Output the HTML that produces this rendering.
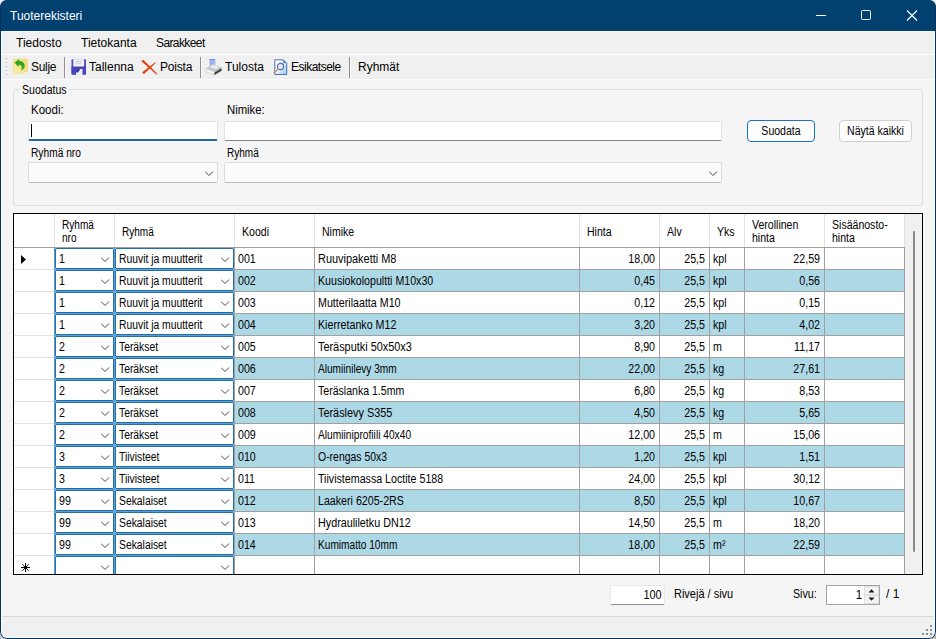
<!DOCTYPE html>
<html lang="fi"><head><meta charset="utf-8"><title>Tuoterekisteri</title>
<style>
html,body{margin:0;padding:0;}
body{width:936px;height:639px;overflow:hidden;background:#c9c9c9;font-family:"Liberation Sans",sans-serif;font-size:11px;color:#000;position:relative;}
.abs,.abs *{position:absolute;box-sizing:border-box;}
#win{left:0;top:0;width:936px;height:639px;border-radius:7px;background:#f5f5f5;overflow:hidden;}
#title{left:0;top:0;width:936px;height:31px;background:#02406f;color:#fff;font-size:12px;}
#title span{left:10px;top:9px;white-space:nowrap;}
#menu{left:1px;top:31px;width:934px;height:24px;background:#f0f0f0;font-size:12px;}
#menu span{top:5px;white-space:nowrap;}
#tool{left:1px;top:55px;width:934px;height:24px;background:#f0f0f0;border-top:1px solid #f0f0f0;font-size:12px;}
#tool span{top:4px;white-space:nowrap;}
.sep{top:1px;width:2px;height:21px;background:#8f8f8f;border-right:1px solid #fafafa;}
.lbl{white-space:nowrap;}
.g{font-size:12px;transform:scaleX(.879);transform-origin:0 0;line-height:13px;}
.b{font-size:13px;transform-origin:0 0;line-height:15px;}
.tb{background:#fff;border:1px solid #e3e3e3;border-bottom:1px solid #868686;border-radius:2px;}
.cb{background:#fcfcfc;border:1px solid #dcdcdc;border-bottom-color:#bdbdbd;border-radius:2px;}
.btn{background:#fdfdfd;border:1px solid #d0d0d0;border-radius:4px;}
.btn div{left:0;top:0;width:100%;text-align:center;line-height:21px;font-size:12px;transform:scaleX(.879);white-space:nowrap;}
#grid{left:13px;top:213px;width:910px;height:362px;background:#fff;border:1px solid #000;overflow:hidden;}
.hl{background:#a0a0a0;}
.hh{background:#e2e2e2;}
.bl{background:#5a9fd6;}
.alt{background:#add8e6;}
.c{white-space:nowrap;font-size:12px;transform:scaleX(.888);transform-origin:0 0;line-height:21px;height:22px;padding-top:1px;}
.r{text-align:right;transform-origin:100% 0;}
.cbx{border:1px solid #2170a8;background:#fff;height:21px;border-radius:1px;}
</style></head><body>
<div class="abs"><div style="left:0;top:0;width:10px;height:10px;background:#e6e8ee"></div><div style="left:926px;top:0;width:10px;height:10px;background:#e9ebee"></div><div style="left:0;top:629px;width:10px;height:10px;background:#c3c6ca"></div><div style="left:926px;top:629px;width:10px;height:10px;background:#b6b6a6"></div></div>
<div class="abs" id="win">
<div id="title"><span>Tuoterekisteri</span>
<svg style="left:798px;top:0" width="138" height="31" viewBox="0 0 138 31"><g stroke="#fff" stroke-width="1" fill="none"><path d="M18 15.5h10"/><rect x="63.5" y="10.5" width="9" height="9" rx="1"/><path d="M109 10.500l10 10M119 10.500l-10 10" stroke-width="1.100"/></g></svg>
</div>
<div id="menu"><span style="left:15px">Tiedosto</span><span style="left:80px">Tietokanta</span><span style="left:155px;letter-spacing:-0.6px">Sarakkeet</span></div>
<div style="left:1px;top:54px;width:934px;height:1px;background:#fdfdfd"></div>
<div id="tool">
<svg style="left:3px;top:0px" width="5" height="22" viewBox="0 0 5 22"><g fill="#a6a6a6"><rect x="2" y="2" width="1" height="1"/><rect x="2" y="6" width="1" height="1"/><rect x="2" y="10" width="1" height="1"/><rect x="2" y="14" width="1" height="1"/><rect x="2" y="18" width="1" height="1"/></g><g fill="#fff"><rect x="1" y="3" width="1" height="1"/><rect x="1" y="7" width="1" height="1"/><rect x="1" y="11" width="1" height="1"/><rect x="1" y="15" width="1" height="1"/><rect x="1" y="19" width="1" height="1"/></g></svg>
<svg style="left:10px;top:1px" width="19" height="19" viewBox="0 0 19 19"><defs><linearGradient id="gy" x1="1" y1="0" x2="0" y2="1"><stop offset="0" stop-color="#f3d765"/><stop offset="1" stop-color="#fdf3b4"/></linearGradient></defs><path d="M2.500 2.200L16.300 2l.2 12.300-5.500 1.200-1.500 1.300-1.500-.8-5.300 1z" fill="url(#gy)" stroke="#ecd27a" stroke-width=".7"/><path d="M3.800 5.600L7.800 2.700L8 4.200C11 4 13.600 6 13.500 9C13.400 10.800 12 12.300 10.400 13.200C11.200 11.500 11.300 9.500 10 8.200C9.300 7.600 8.300 7.400 7.500 7.500L7.300 9.500Z" fill="#2daa1c" stroke="#1f8a14" stroke-width=".4"/></svg>
<span style="left:30px;letter-spacing:-0.3px">Sulje</span>
<div class="sep" style="left:63px"></div>
<svg style="left:69px;top:1px" width="18" height="19" viewBox="0 0 18 19"><path d="M1.500 3.200q0-1 1-1h12.500q1 0 1 1v13.500q0 1-1 1h-12.500q-1 0-1-1z" fill="#5552c4"/><path d="M1.500 9h14.500v7.500q0 1-1 1h-12.500q-1 0-1-1z" fill="#4a45b8"/><rect x="3.300" y="2.200" width="10.700" height="7.300" fill="#f4f5fb"/><rect x="5.300" y="4" width="6.700" height="1.200" fill="#c9cbd3"/><rect x="5.300" y="6" width="6.700" height="1.200" fill="#d5d7de"/><path d="M6 12h6.500v6h-6.500z" fill="#eeeef6"/><path d="M6 12h4.200l-2 3.500h-2.200z" fill="#403cae"/></svg>
<span style="left:88px">Tallenna</span>
<svg style="left:138px;top:1px" width="20" height="20" viewBox="0 0 20 20"><path d="M2.300 4.200L4.300 2.800 18.300 16.800l-.8.700z" fill="#e2400f"/><path d="M3.200 15.300L4.800 17.300 16.800 6l-.6-.7z" fill="#e2400f"/></svg>
<span style="left:159px;letter-spacing:-0.2px">Poista</span>
<div class="sep" style="left:199px"></div>
<svg style="left:203px;top:1px" width="20" height="20" viewBox="0 0 20 20"><defs><linearGradient id="gp" x1="0" y1="0" x2="1" y2="0"><stop offset="0" stop-color="#8ea5ee"/><stop offset="1" stop-color="#a9c0fa"/></linearGradient></defs><path d="M5.800 2.800h5.700v6h-5.700z" fill="url(#gp)"/><path d="M5 2h6l.8.900h-6.800z" fill="#8394e4"/><path d="M2 11.500L8.300 7l9.200 3.500-7 4.500z" fill="#c6c8ca"/><path d="M6 10l3-2.200 6.200 2.400-3 2.100z" fill="#e9ebed"/><path d="M2 11.500l8.500 3.500v3.200L2 14.600z" fill="#f7f7f7" stroke="#bcbcbc" stroke-width=".5"/><path d="M10.500 15l7-4.500v3.400l-7 4.300z" fill="#8a8c8e"/><path d="M10.500 16l7-4.300v1.500l-7 4.200z" fill="#2b2b2b"/></svg>
<span style="left:224px">Tulosta</span>
<svg style="left:270px;top:1px" width="19" height="20" viewBox="0 0 19 20"><defs><linearGradient id="gd" x1="0" y1="0" x2="1" y2="1"><stop offset="0" stop-color="#ffffff"/><stop offset=".45" stop-color="#f2f8fe"/><stop offset="1" stop-color="#8cc6f2"/></linearGradient></defs><path d="M3.800 2.800h8.400l3.500 3.500v11.200H3.800z" fill="url(#gd)" stroke="#4c6fc4" stroke-width="1"/><path d="M12.200 2.800l3.500 3.500h-3.500z" fill="#4f7fd6"/><circle cx="9.500" cy="9.500" r="3.100" fill="#dfe9fb" fill-opacity=".85" stroke="#5865a6" stroke-width="1.100"/><path d="M7 12.200L3 15.800" stroke="#d98a3c" stroke-width="1.300" stroke-linecap="round"/></svg>
<span style="left:290px;letter-spacing:-0.5px">Esikatsele</span>
<div class="sep" style="left:348px"></div>
<span style="left:357px">Ryhmät</span>
</div>
<div style="left:1px;top:79px;width:934px;height:1px;background:#fbfbfb"></div>
<div style="left:13px;top:89px;width:910px;height:117px;border:1px solid #dcdcdc;border-radius:3px;"></div>
<div style="left:20px;top:88px;width:48px;height:3px;background:#f5f5f5"></div><div class="lbl g" style="left:22px;top:84px;">Suodatus</div>
<div class="lbl b" style="left:31px;top:102px;transform:scaleX(.886)">Koodi:</div>
<div class="lbl b" style="left:227px;top:102px;transform:scaleX(.87)">Nimike:</div>
<div class="tb" style="left:28px;top:121px;width:190px;height:20px;border-bottom:2px solid #1a6aa8;"><div style="left:2px;top:2px;width:1px;height:13px;background:#000"></div></div>
<div class="tb" style="left:224px;top:121px;width:498px;height:20px;"></div>
<div class="lbl g" style="left:31px;top:147px;transform:scaleX(.85)">Ryhmä nro</div>
<div class="lbl g" style="left:227px;top:147px;transform:scaleX(.835)">Ryhmä</div>
<div class="cb" style="left:28px;top:162px;width:190px;height:21px;"><svg style="left:176px;top:8px" width="9" height="6" viewBox="0 0 9 6"><path d="M0 .5l4 4 4-4" fill="none" stroke="#4a4a4a" stroke-width="1"/></svg></div>
<div class="cb" style="left:224px;top:162px;width:498px;height:21px;"><svg style="left:484px;top:8px" width="9" height="6" viewBox="0 0 9 6"><path d="M0 .5l4 4 4-4" fill="none" stroke="#4a4a4a" stroke-width="1"/></svg></div>
<div class="btn" style="left:747px;top:120px;width:68px;height:22px;border-color:#1873c4;"><div>Suodata</div></div>
<div class="btn" style="left:839px;top:120px;width:73px;height:22px;"><div>Näytä kaikki</div></div>
<div id="grid">
<div class="hh" style="left:40px;top:0;width:1px;height:33px"></div><div class="hh" style="left:100px;top:0;width:1px;height:33px"></div><div class="hh" style="left:220px;top:0;width:1px;height:33px"></div><div class="hh" style="left:300px;top:0;width:1px;height:33px"></div><div class="hh" style="left:565px;top:0;width:1px;height:33px"></div><div class="hh" style="left:645px;top:0;width:1px;height:33px"></div><div class="hh" style="left:695px;top:0;width:1px;height:33px"></div><div class="hh" style="left:730px;top:0;width:1px;height:33px"></div><div class="hh" style="left:810px;top:0;width:1px;height:33px"></div><div class="hh" style="left:890px;top:0;width:1px;height:33px"></div><div class="hl" style="left:0;top:33px;width:891px;height:1px"></div><div class="lbl g" style="left:48px;top:5px;transform:scaleX(0.84)">Ryhmä<br>nro</div><div class="lbl g" style="left:108px;top:12px;transform:scaleX(0.835)">Ryhmä</div><div class="lbl g" style="left:228px;top:12px;transform:scaleX(0.879)">Koodi</div><div class="lbl g" style="left:308px;top:12px;transform:scaleX(0.879)">Nimike</div><div class="lbl g" style="left:573px;top:12px;transform:scaleX(0.879)">Hinta</div><div class="lbl g" style="left:653px;top:12px;transform:scaleX(0.879)">Alv</div><div class="lbl g" style="left:703px;top:12px;transform:scaleX(0.879)">Yks</div><div class="lbl g" style="left:738px;top:5px;transform:scaleX(0.879)">Verollinen<br>hinta</div><div class="lbl g" style="left:818px;top:5px;transform:scaleX(0.879)">Sisäänosto-<br>hinta</div><div class="bl" style="left:40px;top:55px;width:180px;height:1px"></div><div class="hl" style="left:220px;top:55px;width:671px;height:1px"></div><div class="hh" style="left:0;top:55px;width:40px;height:1px"></div><div class="cbx" style="left:41px;top:34px;width:59px"><div class="c" style="left:3px;top:-1px">1</div><svg style="left:45px;top:8px" width="9" height="6" viewBox="0 0 9 6"><path d="M0 .5l4 4 4-4" fill="none" stroke="#4a4a4a" stroke-width="1"/></svg></div><div class="cbx" style="left:101px;top:34px;width:119px"><div class="c" style="left:3px;top:-1px;transform:scaleX(.862)">Ruuvit ja muutterit</div><svg style="left:105px;top:8px" width="9" height="6" viewBox="0 0 9 6"><path d="M0 .5l4 4 4-4" fill="none" stroke="#4a4a4a" stroke-width="1"/></svg></div><div class="c" style="left:224px;top:34px">001</div><div class="c" style="left:304px;top:34px;transform:scaleX(0.911)">Ruuvipaketti M8</div><div class="c r" style="left:566px;top:34px;width:75px">18,00</div><div class="c r" style="left:646px;top:34px;width:45px">25,5</div><div class="c" style="left:699px;top:34px">kpl</div><div class="c r" style="left:731px;top:34px;width:75px">22,59</div><div class="alt" style="left:221px;top:56px;width:669px;height:21px"></div><div class="bl" style="left:40px;top:77px;width:180px;height:1px"></div><div class="hl" style="left:220px;top:77px;width:671px;height:1px"></div><div class="hh" style="left:0;top:77px;width:40px;height:1px"></div><div class="cbx" style="left:41px;top:56px;width:59px"><div class="c" style="left:3px;top:-1px">1</div><svg style="left:45px;top:8px" width="9" height="6" viewBox="0 0 9 6"><path d="M0 .5l4 4 4-4" fill="none" stroke="#4a4a4a" stroke-width="1"/></svg></div><div class="cbx" style="left:101px;top:56px;width:119px"><div class="c" style="left:3px;top:-1px;transform:scaleX(.862)">Ruuvit ja muutterit</div><svg style="left:105px;top:8px" width="9" height="6" viewBox="0 0 9 6"><path d="M0 .5l4 4 4-4" fill="none" stroke="#4a4a4a" stroke-width="1"/></svg></div><div class="c" style="left:224px;top:56px">002</div><div class="c" style="left:304px;top:56px;transform:scaleX(0.886)">Kuusiokolopultti M10x30</div><div class="c r" style="left:566px;top:56px;width:75px">0,45</div><div class="c r" style="left:646px;top:56px;width:45px">25,5</div><div class="c" style="left:699px;top:56px">kpl</div><div class="c r" style="left:731px;top:56px;width:75px">0,56</div><div class="bl" style="left:40px;top:99px;width:180px;height:1px"></div><div class="hl" style="left:220px;top:99px;width:671px;height:1px"></div><div class="hh" style="left:0;top:99px;width:40px;height:1px"></div><div class="cbx" style="left:41px;top:78px;width:59px"><div class="c" style="left:3px;top:-1px">1</div><svg style="left:45px;top:8px" width="9" height="6" viewBox="0 0 9 6"><path d="M0 .5l4 4 4-4" fill="none" stroke="#4a4a4a" stroke-width="1"/></svg></div><div class="cbx" style="left:101px;top:78px;width:119px"><div class="c" style="left:3px;top:-1px;transform:scaleX(.862)">Ruuvit ja muutterit</div><svg style="left:105px;top:8px" width="9" height="6" viewBox="0 0 9 6"><path d="M0 .5l4 4 4-4" fill="none" stroke="#4a4a4a" stroke-width="1"/></svg></div><div class="c" style="left:224px;top:78px">003</div><div class="c" style="left:304px;top:78px;transform:scaleX(0.89)">Mutterilaatta M10</div><div class="c r" style="left:566px;top:78px;width:75px">0,12</div><div class="c r" style="left:646px;top:78px;width:45px">25,5</div><div class="c" style="left:699px;top:78px">kpl</div><div class="c r" style="left:731px;top:78px;width:75px">0,15</div><div class="alt" style="left:221px;top:100px;width:669px;height:21px"></div><div class="bl" style="left:40px;top:121px;width:180px;height:1px"></div><div class="hl" style="left:220px;top:121px;width:671px;height:1px"></div><div class="hh" style="left:0;top:121px;width:40px;height:1px"></div><div class="cbx" style="left:41px;top:100px;width:59px"><div class="c" style="left:3px;top:-1px">1</div><svg style="left:45px;top:8px" width="9" height="6" viewBox="0 0 9 6"><path d="M0 .5l4 4 4-4" fill="none" stroke="#4a4a4a" stroke-width="1"/></svg></div><div class="cbx" style="left:101px;top:100px;width:119px"><div class="c" style="left:3px;top:-1px;transform:scaleX(.862)">Ruuvit ja muutterit</div><svg style="left:105px;top:8px" width="9" height="6" viewBox="0 0 9 6"><path d="M0 .5l4 4 4-4" fill="none" stroke="#4a4a4a" stroke-width="1"/></svg></div><div class="c" style="left:224px;top:100px">004</div><div class="c" style="left:304px;top:100px;transform:scaleX(0.89)">Kierretanko M12</div><div class="c r" style="left:566px;top:100px;width:75px">3,20</div><div class="c r" style="left:646px;top:100px;width:45px">25,5</div><div class="c" style="left:699px;top:100px">kpl</div><div class="c r" style="left:731px;top:100px;width:75px">4,02</div><div class="bl" style="left:40px;top:143px;width:180px;height:1px"></div><div class="hl" style="left:220px;top:143px;width:671px;height:1px"></div><div class="hh" style="left:0;top:143px;width:40px;height:1px"></div><div class="cbx" style="left:41px;top:122px;width:59px"><div class="c" style="left:3px;top:-1px">2</div><svg style="left:45px;top:8px" width="9" height="6" viewBox="0 0 9 6"><path d="M0 .5l4 4 4-4" fill="none" stroke="#4a4a4a" stroke-width="1"/></svg></div><div class="cbx" style="left:101px;top:122px;width:119px"><div class="c" style="left:3px;top:-1px;transform:scaleX(.862)">Teräkset</div><svg style="left:105px;top:8px" width="9" height="6" viewBox="0 0 9 6"><path d="M0 .5l4 4 4-4" fill="none" stroke="#4a4a4a" stroke-width="1"/></svg></div><div class="c" style="left:224px;top:122px">005</div><div class="c" style="left:304px;top:122px;transform:scaleX(0.907)">Teräsputki 50x50x3</div><div class="c r" style="left:566px;top:122px;width:75px">8,90</div><div class="c r" style="left:646px;top:122px;width:45px">25,5</div><div class="c" style="left:699px;top:122px">m</div><div class="c r" style="left:731px;top:122px;width:75px">11,17</div><div class="alt" style="left:221px;top:144px;width:669px;height:21px"></div><div class="bl" style="left:40px;top:165px;width:180px;height:1px"></div><div class="hl" style="left:220px;top:165px;width:671px;height:1px"></div><div class="hh" style="left:0;top:165px;width:40px;height:1px"></div><div class="cbx" style="left:41px;top:144px;width:59px"><div class="c" style="left:3px;top:-1px">2</div><svg style="left:45px;top:8px" width="9" height="6" viewBox="0 0 9 6"><path d="M0 .5l4 4 4-4" fill="none" stroke="#4a4a4a" stroke-width="1"/></svg></div><div class="cbx" style="left:101px;top:144px;width:119px"><div class="c" style="left:3px;top:-1px;transform:scaleX(.862)">Teräkset</div><svg style="left:105px;top:8px" width="9" height="6" viewBox="0 0 9 6"><path d="M0 .5l4 4 4-4" fill="none" stroke="#4a4a4a" stroke-width="1"/></svg></div><div class="c" style="left:224px;top:144px">006</div><div class="c" style="left:304px;top:144px;transform:scaleX(0.843)">Alumiinilevy 3mm</div><div class="c r" style="left:566px;top:144px;width:75px">22,00</div><div class="c r" style="left:646px;top:144px;width:45px">25,5</div><div class="c" style="left:699px;top:144px">kg</div><div class="c r" style="left:731px;top:144px;width:75px">27,61</div><div class="bl" style="left:40px;top:187px;width:180px;height:1px"></div><div class="hl" style="left:220px;top:187px;width:671px;height:1px"></div><div class="hh" style="left:0;top:187px;width:40px;height:1px"></div><div class="cbx" style="left:41px;top:166px;width:59px"><div class="c" style="left:3px;top:-1px">2</div><svg style="left:45px;top:8px" width="9" height="6" viewBox="0 0 9 6"><path d="M0 .5l4 4 4-4" fill="none" stroke="#4a4a4a" stroke-width="1"/></svg></div><div class="cbx" style="left:101px;top:166px;width:119px"><div class="c" style="left:3px;top:-1px;transform:scaleX(.862)">Teräkset</div><svg style="left:105px;top:8px" width="9" height="6" viewBox="0 0 9 6"><path d="M0 .5l4 4 4-4" fill="none" stroke="#4a4a4a" stroke-width="1"/></svg></div><div class="c" style="left:224px;top:166px">007</div><div class="c" style="left:304px;top:166px;transform:scaleX(0.88)">Teräslanka 1.5mm</div><div class="c r" style="left:566px;top:166px;width:75px">6,80</div><div class="c r" style="left:646px;top:166px;width:45px">25,5</div><div class="c" style="left:699px;top:166px">kg</div><div class="c r" style="left:731px;top:166px;width:75px">8,53</div><div class="alt" style="left:221px;top:188px;width:669px;height:21px"></div><div class="bl" style="left:40px;top:209px;width:180px;height:1px"></div><div class="hl" style="left:220px;top:209px;width:671px;height:1px"></div><div class="hh" style="left:0;top:209px;width:40px;height:1px"></div><div class="cbx" style="left:41px;top:188px;width:59px"><div class="c" style="left:3px;top:-1px">2</div><svg style="left:45px;top:8px" width="9" height="6" viewBox="0 0 9 6"><path d="M0 .5l4 4 4-4" fill="none" stroke="#4a4a4a" stroke-width="1"/></svg></div><div class="cbx" style="left:101px;top:188px;width:119px"><div class="c" style="left:3px;top:-1px;transform:scaleX(.862)">Teräkset</div><svg style="left:105px;top:8px" width="9" height="6" viewBox="0 0 9 6"><path d="M0 .5l4 4 4-4" fill="none" stroke="#4a4a4a" stroke-width="1"/></svg></div><div class="c" style="left:224px;top:188px">008</div><div class="c" style="left:304px;top:188px;transform:scaleX(0.905)">Teräslevy S355</div><div class="c r" style="left:566px;top:188px;width:75px">4,50</div><div class="c r" style="left:646px;top:188px;width:45px">25,5</div><div class="c" style="left:699px;top:188px">kg</div><div class="c r" style="left:731px;top:188px;width:75px">5,65</div><div class="bl" style="left:40px;top:231px;width:180px;height:1px"></div><div class="hl" style="left:220px;top:231px;width:671px;height:1px"></div><div class="hh" style="left:0;top:231px;width:40px;height:1px"></div><div class="cbx" style="left:41px;top:210px;width:59px"><div class="c" style="left:3px;top:-1px">2</div><svg style="left:45px;top:8px" width="9" height="6" viewBox="0 0 9 6"><path d="M0 .5l4 4 4-4" fill="none" stroke="#4a4a4a" stroke-width="1"/></svg></div><div class="cbx" style="left:101px;top:210px;width:119px"><div class="c" style="left:3px;top:-1px;transform:scaleX(.862)">Teräkset</div><svg style="left:105px;top:8px" width="9" height="6" viewBox="0 0 9 6"><path d="M0 .5l4 4 4-4" fill="none" stroke="#4a4a4a" stroke-width="1"/></svg></div><div class="c" style="left:224px;top:210px">009</div><div class="c" style="left:304px;top:210px;transform:scaleX(0.851)">Alumiiniprofiili 40x40</div><div class="c r" style="left:566px;top:210px;width:75px">12,00</div><div class="c r" style="left:646px;top:210px;width:45px">25,5</div><div class="c" style="left:699px;top:210px">m</div><div class="c r" style="left:731px;top:210px;width:75px">15,06</div><div class="alt" style="left:221px;top:232px;width:669px;height:21px"></div><div class="bl" style="left:40px;top:253px;width:180px;height:1px"></div><div class="hl" style="left:220px;top:253px;width:671px;height:1px"></div><div class="hh" style="left:0;top:253px;width:40px;height:1px"></div><div class="cbx" style="left:41px;top:232px;width:59px"><div class="c" style="left:3px;top:-1px">3</div><svg style="left:45px;top:8px" width="9" height="6" viewBox="0 0 9 6"><path d="M0 .5l4 4 4-4" fill="none" stroke="#4a4a4a" stroke-width="1"/></svg></div><div class="cbx" style="left:101px;top:232px;width:119px"><div class="c" style="left:3px;top:-1px;transform:scaleX(.862)">Tiivisteet</div><svg style="left:105px;top:8px" width="9" height="6" viewBox="0 0 9 6"><path d="M0 .5l4 4 4-4" fill="none" stroke="#4a4a4a" stroke-width="1"/></svg></div><div class="c" style="left:224px;top:232px">010</div><div class="c" style="left:304px;top:232px;transform:scaleX(0.871)">O-rengas 50x3</div><div class="c r" style="left:566px;top:232px;width:75px">1,20</div><div class="c r" style="left:646px;top:232px;width:45px">25,5</div><div class="c" style="left:699px;top:232px">kpl</div><div class="c r" style="left:731px;top:232px;width:75px">1,51</div><div class="bl" style="left:40px;top:275px;width:180px;height:1px"></div><div class="hl" style="left:220px;top:275px;width:671px;height:1px"></div><div class="hh" style="left:0;top:275px;width:40px;height:1px"></div><div class="cbx" style="left:41px;top:254px;width:59px"><div class="c" style="left:3px;top:-1px">3</div><svg style="left:45px;top:8px" width="9" height="6" viewBox="0 0 9 6"><path d="M0 .5l4 4 4-4" fill="none" stroke="#4a4a4a" stroke-width="1"/></svg></div><div class="cbx" style="left:101px;top:254px;width:119px"><div class="c" style="left:3px;top:-1px;transform:scaleX(.862)">Tiivisteet</div><svg style="left:105px;top:8px" width="9" height="6" viewBox="0 0 9 6"><path d="M0 .5l4 4 4-4" fill="none" stroke="#4a4a4a" stroke-width="1"/></svg></div><div class="c" style="left:224px;top:254px">011</div><div class="c" style="left:304px;top:254px;transform:scaleX(0.888)">Tiivistemassa Loctite 5188</div><div class="c r" style="left:566px;top:254px;width:75px">24,00</div><div class="c r" style="left:646px;top:254px;width:45px">25,5</div><div class="c" style="left:699px;top:254px">kpl</div><div class="c r" style="left:731px;top:254px;width:75px">30,12</div><div class="alt" style="left:221px;top:276px;width:669px;height:21px"></div><div class="bl" style="left:40px;top:297px;width:180px;height:1px"></div><div class="hl" style="left:220px;top:297px;width:671px;height:1px"></div><div class="hh" style="left:0;top:297px;width:40px;height:1px"></div><div class="cbx" style="left:41px;top:276px;width:59px"><div class="c" style="left:3px;top:-1px">99</div><svg style="left:45px;top:8px" width="9" height="6" viewBox="0 0 9 6"><path d="M0 .5l4 4 4-4" fill="none" stroke="#4a4a4a" stroke-width="1"/></svg></div><div class="cbx" style="left:101px;top:276px;width:119px"><div class="c" style="left:3px;top:-1px;transform:scaleX(.862)">Sekalaiset</div><svg style="left:105px;top:8px" width="9" height="6" viewBox="0 0 9 6"><path d="M0 .5l4 4 4-4" fill="none" stroke="#4a4a4a" stroke-width="1"/></svg></div><div class="c" style="left:224px;top:276px">012</div><div class="c" style="left:304px;top:276px;transform:scaleX(0.888)">Laakeri 6205-2RS</div><div class="c r" style="left:566px;top:276px;width:75px">8,50</div><div class="c r" style="left:646px;top:276px;width:45px">25,5</div><div class="c" style="left:699px;top:276px">kpl</div><div class="c r" style="left:731px;top:276px;width:75px">10,67</div><div class="bl" style="left:40px;top:319px;width:180px;height:1px"></div><div class="hl" style="left:220px;top:319px;width:671px;height:1px"></div><div class="hh" style="left:0;top:319px;width:40px;height:1px"></div><div class="cbx" style="left:41px;top:298px;width:59px"><div class="c" style="left:3px;top:-1px">99</div><svg style="left:45px;top:8px" width="9" height="6" viewBox="0 0 9 6"><path d="M0 .5l4 4 4-4" fill="none" stroke="#4a4a4a" stroke-width="1"/></svg></div><div class="cbx" style="left:101px;top:298px;width:119px"><div class="c" style="left:3px;top:-1px;transform:scaleX(.862)">Sekalaiset</div><svg style="left:105px;top:8px" width="9" height="6" viewBox="0 0 9 6"><path d="M0 .5l4 4 4-4" fill="none" stroke="#4a4a4a" stroke-width="1"/></svg></div><div class="c" style="left:224px;top:298px">013</div><div class="c" style="left:304px;top:298px;transform:scaleX(0.897)">Hydrauliletku DN12</div><div class="c r" style="left:566px;top:298px;width:75px">14,50</div><div class="c r" style="left:646px;top:298px;width:45px">25,5</div><div class="c" style="left:699px;top:298px">m</div><div class="c r" style="left:731px;top:298px;width:75px">18,20</div><div class="alt" style="left:221px;top:320px;width:669px;height:21px"></div><div class="bl" style="left:40px;top:341px;width:180px;height:1px"></div><div class="hl" style="left:220px;top:341px;width:671px;height:1px"></div><div class="hh" style="left:0;top:341px;width:40px;height:1px"></div><div class="cbx" style="left:41px;top:320px;width:59px"><div class="c" style="left:3px;top:-1px">99</div><svg style="left:45px;top:8px" width="9" height="6" viewBox="0 0 9 6"><path d="M0 .5l4 4 4-4" fill="none" stroke="#4a4a4a" stroke-width="1"/></svg></div><div class="cbx" style="left:101px;top:320px;width:119px"><div class="c" style="left:3px;top:-1px;transform:scaleX(.862)">Sekalaiset</div><svg style="left:105px;top:8px" width="9" height="6" viewBox="0 0 9 6"><path d="M0 .5l4 4 4-4" fill="none" stroke="#4a4a4a" stroke-width="1"/></svg></div><div class="c" style="left:224px;top:320px">014</div><div class="c" style="left:304px;top:320px;transform:scaleX(0.844)">Kumimatto 10mm</div><div class="c r" style="left:566px;top:320px;width:75px">18,00</div><div class="c r" style="left:646px;top:320px;width:45px">25,5</div><div class="c" style="left:699px;top:320px">m²</div><div class="c r" style="left:731px;top:320px;width:75px">22,59</div><div class="bl" style="left:40px;top:363px;width:180px;height:1px"></div><div class="hl" style="left:220px;top:363px;width:671px;height:1px"></div><div class="hh" style="left:0;top:363px;width:40px;height:1px"></div><div class="cbx" style="left:41px;top:342px;width:59px"><svg style="left:45px;top:8px" width="9" height="6" viewBox="0 0 9 6"><path d="M0 .5l4 4 4-4" fill="none" stroke="#4a4a4a" stroke-width="1"/></svg></div><div class="cbx" style="left:101px;top:342px;width:119px"><svg style="left:105px;top:8px" width="9" height="6" viewBox="0 0 9 6"><path d="M0 .5l4 4 4-4" fill="none" stroke="#4a4a4a" stroke-width="1"/></svg></div><div class="bl" style="left:40px;top:34px;width:1px;height:330px"></div><div class="bl" style="left:100px;top:34px;width:1px;height:330px"></div><div class="hl" style="left:220px;top:34px;width:1px;height:330px"></div><div class="hl" style="left:300px;top:34px;width:1px;height:330px"></div><div class="hl" style="left:565px;top:34px;width:1px;height:330px"></div><div class="hl" style="left:645px;top:34px;width:1px;height:330px"></div><div class="hl" style="left:695px;top:34px;width:1px;height:330px"></div><div class="hl" style="left:730px;top:34px;width:1px;height:330px"></div><div class="hl" style="left:810px;top:34px;width:1px;height:330px"></div><div class="hl" style="left:890px;top:34px;width:1px;height:330px"></div><svg style="left:7px;top:41px" width="6" height="9" viewBox="0 0 6 9"><path d="M0 0l5 4.500L0 9z" fill="#000"/></svg><svg style="left:7px;top:349px" width="9" height="9" viewBox="0 0 9 9"><g stroke="#000" stroke-width="1" fill="none"><path d="M0 4.500h9M4.500 0v9"/><path d="M1.300 1.300l6.400 6.400M7.700 1.300l-6.400 6.400" stroke-width=".9"/></g><rect x="3" y="3" width="3" height="3" fill="#000"/></svg><div style="left:891px;top:0;width:17px;height:360px;background:#f0f0f0"></div><div style="left:899px;top:17px;width:2px;height:321px;background:#8a8a8a;border-radius:1px"></div></div>
<div class="tb" style="left:610px;top:585px;width:55px;height:20px;border-color:#e9e9e9;border-bottom-color:#8f8f8f;"><div class="lbl b" style="right:2px;top:1px;transform:scaleX(.84);transform-origin:100% 0">100</div></div>
<div class="lbl b" style="left:674px;top:586px;transform:scaleX(.845)">Rivejä / sivu</div>
<div class="lbl b" style="left:793px;top:586px;transform:scaleX(.82)">Sivu:</div>
<div style="left:826px;top:585px;width:54px;height:20px;background:#fff;border:1px solid #a3a3a3;"><div class="lbl b" style="right:17px;top:1px;transform:scaleX(.88);transform-origin:100% 0">1</div>
<div style="left:37px;top:0;width:15px;height:9px;background:#f4f4f4;border:1px solid #e0e0e0"></div>
<div style="left:37px;top:9px;width:15px;height:9px;background:#f4f4f4;border:1px solid #e0e0e0"></div>
<svg style="left:41px;top:3px" width="7" height="13" viewBox="0 0 7 13"><path d="M.5 3.500L3.500 .3l3 3.200zM.5 8.500l3 3.200 3-3.200z" fill="#1a1a1a"/></svg>
</div>
<div class="lbl b" style="left:886px;top:586px;transform:scaleX(.92)">/ 1</div>
<div style="left:1px;top:616px;width:934px;height:1px;background:#d9d9d9"></div>
<div style="left:1px;top:617px;width:934px;height:21px;background:#f0f0f0"></div>
<svg style="left:922px;top:625px" width="12" height="12" viewBox="0 0 12 12"><g fill="#8c8c8c"><rect x="8" y="0" width="2" height="2"/><rect x="4" y="4" width="2" height="2"/><rect x="8" y="4" width="2" height="2"/><rect x="0" y="8" width="2" height="2"/><rect x="4" y="8" width="2" height="2"/><rect x="8" y="8" width="2" height="2"/></g></svg>
<div style="left:1px;top:31px;width:934px;height:607px;border:1px solid #f3fbff;border-radius:0 0 6px 6px;pointer-events:none"></div><div style="left:0;top:0;width:936px;height:639px;border:1px solid #06335c;border-top-color:#02406f;border-radius:7px;pointer-events:none"></div>
</div>
</body></html>
